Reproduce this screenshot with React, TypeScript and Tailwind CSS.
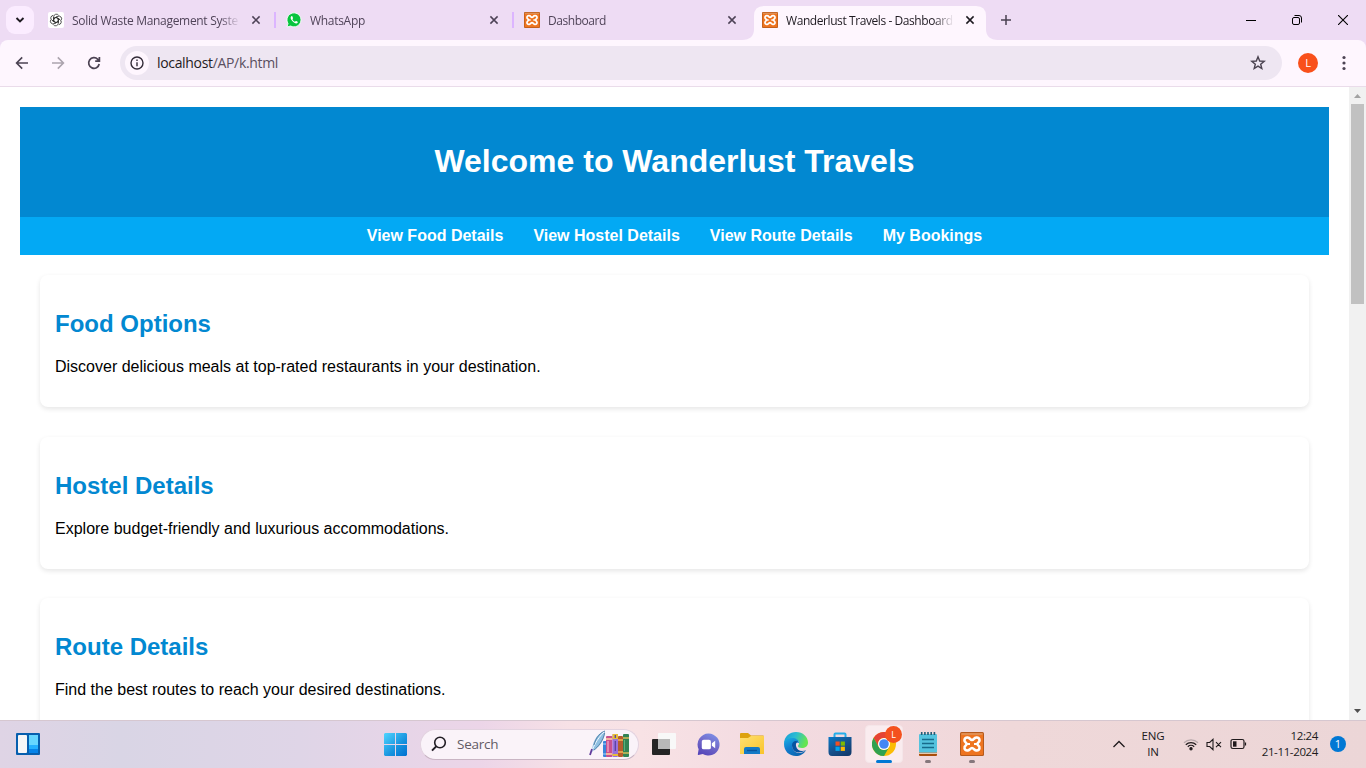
import React from "react";

function Xampp({ size }: { size: number }) {
  return (
    <svg width={size} height={size} viewBox="0 0 24 24">
      <rect width="24" height="24" rx="1.5" fill="#b55a1c" />
      <rect x="1" y="1" width="22" height="22" rx="1" fill="#ee7420" />
      <path d="M1.5 2h21" stroke="#dc9a68" strokeWidth="1.4" />
      <path
        d="M8 5.6C5.6 5.2 4.3 6.6 4.5 8.6C4.6 10.2 6.6 10.6 6.6 12C6.6 13.4 4.6 13.8 4.5 15.4C4.3 17.4 5.6 18.8 8 18.4C10 18.2 10.2 16 12 16C13.8 16 14 18.2 16 18.4C18.4 18.8 19.7 17.4 19.5 15.4C19.4 13.8 17.4 13.4 17.4 12C17.4 10.6 19.4 10.2 19.5 8.6C19.7 6.6 18.4 5.2 16 5.6C14 5.8 13.8 8 12 8C10.2 8 10 5.8 8 5.6Z"
        fill="#ee7420"
        stroke="#fff"
        strokeWidth="2.6"
      />
      <path d="M7 12h3M14 12h3" stroke="#fff" strokeWidth="2" />
    </svg>
  );
}

function ChatGpt() {
  return (
    <svg width="16" height="16" viewBox="0 0 16 16">
      <rect width="16" height="16" rx="2" fill="#fff" />
      <g fill="none" stroke="#333" strokeWidth="0.8">
        {[0, 60, 120, 180, 240, 300].map((a) => (
          <path key={a} transform={`rotate(${a} 8 8)`} d="M5.7 9.4V4.7A2.7 2.7 0 0 1 10.6 3.3M5.7 6.7L8 5.3L11.8 7.5" />
        ))}
      </g>
    </svg>
  );
}

function WhatsApp() {
  return (
    <svg width="16" height="16" viewBox="0 0 16 16">
      <path d="M1 15L2 11.5A7 7 0 1 1 4.6 14Z" fill="#08c43e" stroke="#f7fff9" strokeWidth="0.9" />
      <path d="M5.4 4.2C4.1 5 4.5 7 6.3 9.1C8.2 11.2 10.3 12 11.4 11C12 10.4 11.9 10 11.6 9.8L10.2 9.1C9.8 9 9.3 9.9 9 9.8C8.1 9.5 6.9 8.3 6.5 7.4C6.4 7 7.2 6.6 7 6.1L6.4 4.6C6.2 4.1 5.8 4 5.4 4.2Z" fill="#fff" />
    </svg>
  );
}

function Close({ dark = false }: { dark?: boolean }) {
  return (
    <svg className="shrink-0" width="10" height="10" viewBox="0 0 10 10">
      <path d="M1.4 1.4L8.6 8.6M8.6 1.4L1.4 8.6" stroke={dark ? "#1d1a20" : "#4d4256"} strokeWidth="1.5" />
    </svg>
  );
}

function Tab({ icon, title, active = false, divider = false }: { icon: React.ReactNode; title: React.ReactNode; active?: boolean; divider?: boolean }) {
  return (
    <div className="relative flex h-[34px] w-[238px] shrink-0 items-center pb-[6px] pl-[10px]">
      {active && (
        <svg className="absolute -left-[10px] top-0" width="256" height="34" viewBox="0 0 256 34">
          <path d="M0 34C8 34 12 30 12 23V10Q12 0 22 0H234Q244 0 244 10V23C244 30 248 34 256 34Z" fill="#fef6fe" />
        </svg>
      )}
      <div className="relative flex w-full items-center">
        {icon}
        <div className="mt-[2px] ml-2 w-[168px] whitespace-nowrap text-[12px] leading-4 [mask-image:linear-gradient(to_right,black_148px,transparent_168px)]">
          <span className={active ? "text-[#1f1b22]" : "text-[#504459]"}>{title}</span>
        </div>
        <div className="ml-[11px]">
          <Close dark={active} />
        </div>
      </div>
      {divider && <div className="absolute right-0 top-[6px] h-4 w-[2px] bg-[#dcb5ff]" />}
    </div>
  );
}

function TabStrip() {
  return (
    <div className="flex h-[40px] items-start bg-[#eedcf4] pt-[6px]">
      <div className="ml-[6px] mr-[4px] flex h-7 w-7 items-center justify-center rounded-[9px] bg-[#fbecff]">
        <svg width="10" height="8" viewBox="0 0 10 8">
          <path d="M1.5 2L5 5.5L8.5 2" fill="none" stroke="#1f1b22" strokeWidth="1.9" />
        </svg>
      </div>
      <Tab icon={<ChatGpt />} title={<span className="tracking-[-0.31px]">Solid Waste Management Syste</span>} divider />
      <Tab icon={<WhatsApp />} title={<span className="tracking-[-0.3px]">WhatsApp</span>} divider />
      <Tab icon={<Xampp size={16} />} title={<span className="tracking-[-0.45px]">Dashboard</span>} />
      <Tab icon={<Xampp size={16} />} title={<span className="tracking-[-0.42px]">Wanderlust Travels - Dashboard</span>} active />
      <svg className="ml-[10px] mt-[8px]" width="12" height="12" viewBox="0 0 12 12">
        <path d="M6 1v10M1 6h10" stroke="#4a4050" strokeWidth="1.5" />
      </svg>
      <div className="mr-[18px] ml-auto flex h-7 items-center gap-[36px]">
        <svg width="10" height="10" viewBox="0 0 10 10">
          <path d="M0 5.5h10" stroke="#000" />
        </svg>
        <svg width="10" height="10" viewBox="0 0 10 10" fill="none" stroke="#000">
          <rect x=".5" y="2.5" width="7" height="7" rx="1.5" />
          <path d="M2.5 .5H7A2.5 2.5 0 0 1 9.5 3V7.5" />
        </svg>
        <svg width="10" height="10" viewBox="0 0 10 10">
          <path d="M0 0L10 10M10 0L0 10" stroke="#000" strokeWidth="1.1" />
        </svg>
      </div>
    </div>
  );
}

function Toolbar() {
  return (
    <div className="bg-[#eedcf4]">
      <div className="flex h-[47px] items-center rounded-t-[8px] border-b border-[#eadcea] bg-[#fef6fe]">
        <svg className="ml-[15px]" width="14" height="14" viewBox="0 0 14 14" fill="none" stroke="#4c4353" strokeWidth="1.6">
          <path d="M13 7H2M7.2 1.4L1.6 7L7.2 12.6" />
        </svg>
        <svg className="ml-[22px]" width="14" height="14" viewBox="0 0 14 14" fill="none" stroke="#aca4ae" strokeWidth="1.6">
          <path d="M1 7H12M6.8 1.4L12.4 7L6.8 12.6" />
        </svg>
        <svg className="ml-[22px]" width="14" height="14" viewBox="0 0 14 14" fill="none" stroke="#4c4353" strokeWidth="1.7">
          <path d="M12.2 8A5.3 5.3 0 1 1 10.8 3.3L12.3 4.8M12.4 1V5.2H8.2" />
        </svg>
        <div className="ml-[19px] flex h-[34px] w-[1162px] items-center rounded-full bg-[#eee6f2] pl-[5px] pr-[16px]">
          <div className="flex h-6 w-6 items-center justify-center rounded-full bg-[#fef6fe]">
            <svg width="14" height="14" viewBox="0 0 14 14" fill="none" stroke="#332b38" strokeWidth="1.4">
              <circle cx="7" cy="7" r="6" />
              <path d="M7 6.2V10.3M7 3.6V5.1" />
            </svg>
          </div>
          <div className="ml-2 whitespace-nowrap text-[14px] leading-5 tracking-[-0.33px] text-[#5a4f60]">
            <span className="text-[#1f1b22]">localhost</span>/AP/k.html
          </div>
          <svg className="ml-auto" width="16" height="16" viewBox="0 0 16 16" fill="none" stroke="#4a4250" strokeWidth="1.4">
            <path d="M8 1.8L9.7 6L14.2 6.3L10.7 9.2L11.8 13.6L8 11.2L4.2 13.6L5.3 9.2L1.8 6.3L6.3 6Z" />
          </svg>
        </div>
        <div className="ml-[16px] flex h-5 w-5 items-center justify-center rounded-full bg-[#f9501b] text-[11px] text-white">L</div>
        <svg className="ml-[24px]" width="4" height="16" viewBox="0 0 4 16" fill="#4c4353">
          <circle cx="2" cy="2.5" r="1.6" />
          <circle cx="2" cy="8" r="1.6" />
          <circle cx="2" cy="13.5" r="1.6" />
        </svg>
      </div>
    </div>
  );
}

const cards = [
  ["Food Options", "Discover delicious meals at top-rated restaurants in your destination."],
  ["Hostel Details", "Explore budget-friendly and luxurious accommodations."],
  ["Route Details", "Find the best routes to reach your desired destinations."],
];

function Page() {
  return (
    <div className="flex h-[633px] bg-white font-['Liberation_Sans',Arial,sans-serif]">
      <div className="h-full flex-1 overflow-hidden p-5">
        <header className="flex h-[110px] items-center justify-center bg-[#0288d1] pb-[2px] text-white">
          <h1 className="text-[32px] leading-[36px] font-bold">Welcome to Wanderlust Travels</h1>
        </header>
        <nav className="flex h-[38px] items-center justify-center gap-[30px] bg-[#03a9f4] text-[16px] leading-[18px] font-bold text-white">
          <span>View Food Details</span>
          <span>View Hostel Details</span>
          <span>View Route Details</span>
          <span>My Bookings</span>
        </nav>
        <main className="flex flex-col gap-[29.86px] p-5">
          {cards.map(([title, text]) => (
            <section key={title} className="h-[131.84px] shrink-0 rounded-[8px] bg-white px-[15px] pt-[35px] shadow-[0_2px_5px_rgba(0,0,0,0.1)]">
              <h2 className="text-[24px] leading-[27px] font-bold text-[#0288d1]">{title}</h2>
              <p className="mt-[21px] text-[16px] leading-[18px] text-black">{text}</p>
            </section>
          ))}
        </main>
      </div>
      <div className="flex w-[17px] flex-col items-center justify-between bg-[#f1f1f1]">
        <div className="flex flex-col items-center">
          <svg width="17" height="17" viewBox="0 0 17 17">
            <path d="M5 11L8.5 7L12 11Z" fill="#a3a3a3" />
          </svg>
          <div className="h-[200px] w-[13px] bg-[#c1c1c1]" />
        </div>
        <svg width="17" height="17" viewBox="0 0 17 17">
          <path d="M5 6L8.5 10L12 6Z" fill="#505050" />
        </svg>
      </div>
    </div>
  );
}

function Slot({ children, running = false, active = false }: { children: React.ReactNode; running?: boolean; active?: boolean }) {
  return (
    <div className="relative flex h-full w-[44px] shrink-0 items-center justify-center">
      {active && <div className="absolute inset-x-[3px] top-[4px] h-[38px] rounded-[4px] border border-[#f5e6e9] bg-[#faecef]" />}
      <div className="relative">{children}</div>
      {running && <div className="absolute bottom-[4px] left-[19px] h-[3px] w-[6px] rounded-full bg-[#85777c]" />}
      {active && <div className="absolute bottom-[4px] left-[14px] h-[3px] w-4 rounded-full bg-[#0078d4]" />}
    </div>
  );
}

function Books() {
  return (
    <svg width="41" height="28" viewBox="0 0 41 28">
      <path d="M3 22C3 15 6 4 16 1C16 9 11 17 4 21Z" fill="#8fc0e2" />
      <path d="M1.5 25C4 17 8 9 15 2" fill="none" stroke="#eef8ff" strokeWidth="1" />
      <path d="M16 1C12 2 7 7 5 15M15.7 3C14 11 9 17 5 20" fill="none" stroke="#46749b" strokeWidth=".8" />
      <path d="M1 25L3 19" stroke="#633c9c" strokeWidth="1.8" />
      <rect x="14" y="11" width="4" height="16" rx="1" fill="#3984db" />
      <path d="M14 14h4M14 24h4" stroke="#a5d4fa" />
      <rect x="17" y="6" width="6.5" height="21" rx="1" fill="#c9518f" />
      <path d="M19 11v11" stroke="#ef9fc4" strokeWidth="1.4" />
      <path d="M17 9h6.5M17 24h6.5" stroke="#ffd5a1" strokeWidth="1.4" />
      <rect x="23.5" y="4" width="5.5" height="23" rx="1" fill="#9a71dc" />
      <path d="M23.5 4h5.5v5h-5.5zM23.5 24h5.5v2h-5.5z" fill="#e7bd38" />
      <path d="M26.3 5v3M26.3 11v10" stroke="#5b43a0" strokeWidth="1.3" />
      <rect x="29" y="6" width="5" height="21" rx="1" fill="#b65c2e" />
      <path d="M29 10h5M29 22h5" stroke="#f2b554" strokeWidth="1.4" />
      <rect x="34" y="4" width="6" height="23" rx="1" fill="#328354" />
      <path d="M34 8h6M34 23h6" stroke="#d5bd59" strokeWidth="1.4" />
      <path d="M35.5 10v11" stroke="#69b984" strokeWidth=".8" />
    </svg>
  );
}

function StartIcon() {
  return (
    <svg width="23" height="23" viewBox="0 0 23 23">
      <defs>
        <linearGradient id="start" x1="0" y1="0" x2="1" y2="1">
          <stop stopColor="#50d5ff" />
          <stop offset=".6" stopColor="#1692de" />
          <stop offset="1" stopColor="#0070d0" />
        </linearGradient>
      </defs>
      <path d="M1 0H11V11H0V1ZM12 0H22L23 1V11H12ZM0 12H11V23H1L0 22ZM12 12H23V22L22 23H12Z" fill="url(#start)" />
    </svg>
  );
}

function Chat() {
  return (
    <svg width="23" height="23" viewBox="0 0 24 24">
      <defs>
        <linearGradient id="chat" x1=".8" y1="0" x2=".3" y2="1">
          <stop stopColor="#7d91e8" />
          <stop offset=".5" stopColor="#7269c9" />
          <stop offset="1" stopColor="#5647ba" />
        </linearGradient>
      </defs>
      <path d="M12 .5A11.5 11.5 0 1 1 6 21.8L1.5 23Q.6 23.2 .9 22L1.7 17A11.5 11.5 0 0 1 12 .5Z" fill="url(#chat)" />
      <rect x="5" y="7" width="9.5" height="10" rx="2" fill="#fff" />
      <path d="M15.5 10.7L19 8V16L15.5 13.3Z" fill="#fff" />
    </svg>
  );
}

function Explorer() {
  return (
    <svg width="24" height="24" viewBox="0 0 24 24">
      <defs>
        <linearGradient id="folder" x1="0" y1="0" x2="1" y2="1">
          <stop stopColor="#ffe071" />
          <stop offset="1" stopColor="#f9c42c" />
        </linearGradient>
      </defs>
      <path d="M0 2Q0 1 1 1H8L11 3.5H23Q24 3.5 24 4.5V10H0Z" fill="#dda20e" />
      <path d="M0 6H8L11 4H24V22H0Z" fill="url(#folder)" />
      <path d="M4 22V17Q4 15 6 15H18Q20 15 20 17V22Z" fill="#147ac6" />
      <path d="M7 18.5H17" stroke="#0a559c" strokeWidth="1.4" />
    </svg>
  );
}

function Edge() {
  return (
    <svg width="24" height="24" viewBox="0 0 24 24">
      <defs>
        <linearGradient id="edgetop" x1="0" y1="0" x2="1" y2=".3">
          <stop stopColor="#159dd7" />
          <stop offset=".5" stopColor="#2cbbd3" />
          <stop offset="1" stopColor="#65e552" />
        </linearGradient>
        <linearGradient id="edgeleft" x1="0" y1="0" x2=".6" y2="1">
          <stop stopColor="#1bb1e5" />
          <stop offset=".5" stopColor="#117dce" />
          <stop offset="1" stopColor="#0b65b0" />
        </linearGradient>
      </defs>
      <path d="M0 12C0 4 6 0 12 0C19 0 24 5 24 10.5C24 14.5 21 16 18 16C15 16 14 15 14 14C14 13 15 13 15 11C15 8 12 7 9 7C4 7 0 10 0 12Z" fill="url(#edgetop)" />
      <path d="M0 12C0 8 4 6 8 6C12 6 15 8 15 11C10 9 7 13 9 17C11 22 18 22 22 18C20 22 16 24 12 24C5 24 0 19 0 12Z" fill="url(#edgeleft)" />
      <path d="M8 13C8 18 12 24 22 18C18 20 13 19 12 14C11.5 12 12.5 10.5 14 9.6C11 8 8 10 8 13Z" fill="#0753a0" />
    </svg>
  );
}

function Store() {
  return (
    <svg width="24" height="24" viewBox="0 0 24 24">
      <defs>
        <linearGradient id="store" x1="0" y1="0" x2=".7" y2="1">
          <stop stopColor="#0879c8" />
          <stop offset=".6" stopColor="#16508b" />
          <stop offset="1" stopColor="#123c6e" />
        </linearGradient>
      </defs>
      <path d="M6.5 6V2.5Q6.5 1.5 7.5 1.5H16.5Q17.5 1.5 17.5 2.5V6" fill="none" stroke="#23adea" strokeWidth="2" />
      <path d="M.5 5H23.5V20Q23.5 24 20 24H4Q.5 24 .5 20Z" fill="url(#store)" />
      <path d="M7.5 9.5h4.2v4.2H7.5z" fill="#f25022" />
      <path d="M12.7 9.5h4.2v4.2h-4.2z" fill="#7fba00" />
      <path d="M7.5 14.7h4.2v4.2H7.5z" fill="#00a4ef" />
      <path d="M12.7 14.7h4.2v4.2h-4.2z" fill="#ffb900" />
    </svg>
  );
}

function Chrome() {
  return (
    <div className="relative h-6 w-6">
      <svg width="24" height="24" viewBox="0 0 24 24">
        <circle cx="12" cy="12" r="12" fill="#fbbc05" />
        <path d="M1.6 6A12 12 0 0 1 22.4 6H12A6 6 0 0 0 6.8 15Z" fill="#e54335" />
        <path d="M1.6 6A12 12 0 0 0 12 24L17.2 15A6 6 0 0 1 6.8 15Z" fill="#30a150" />
        <circle cx="12" cy="12" r="6" fill="#fff" />
        <circle cx="12" cy="12" r="4.8" fill="#4387f4" />
      </svg>
      <div className="absolute -top-[6px] left-[13px] flex h-[17px] w-[17px] items-center justify-center rounded-full bg-[#f4511e] text-[9px] text-white">L</div>
    </div>
  );
}

function Notepad() {
  return (
    <svg width="20" height="24" viewBox="0 0 20 24">
      <path d="M1 20H19V23Q19 24 18 24H2Q1 24 1 23Z" fill="#a84e0b" />
      <path d="M1 21.2h18" stroke="#f3e9dd" strokeWidth="1.2" />
      <rect x="1" y="2" width="18" height="18.5" rx="1" fill="#54c3de" />
      <path d="M4 7.5h12M4 11.5h12M4 15.5h12" stroke="#176b8b" strokeWidth="1.7" />
      <path d="M3.7 0v3M6.9 0v3M10 0v3M13.2 0v3M16.4 0v3" stroke="#235c75" strokeWidth="1.6" />
    </svg>
  );
}

function Taskbar() {
  return (
    <div className="flex h-[48px] items-center border-t border-[#d6c7d0] bg-[linear-gradient(90deg,#dfd4e5_0px,#d9d5e5_120px,#dfd5e7_300px,#ecd5e8_480px,#f7e1e6_570px,#f8e2e5_640px,#f3dbe1_760px,#f2d9dd_900px,#efd8d9_1010px,#ecd6d7_1366px)] pb-[1px]">
      <svg className="ml-4" width="24" height="22" viewBox="0 0 24 22">
        <rect width="24" height="22" rx="1" fill="#075fae" />
        <rect x="2" y="2" width="9" height="18" rx="1" fill="#f7f7f7" />
        <path d="M13 2h9v10h-9z" fill="#66d6ff" />
        <path d="M13 12h9v4h-9z" fill="#24b0ff" />
        <path d="M13 16h9v4h-9z" fill="#0583e9" />
      </svg>
      <div className="ml-[333px] flex h-full items-center">
        <Slot>
          <StartIcon />
        </Slot>
        <div className="mr-[3px] ml-[3px] flex h-[31px] w-[219px] items-center rounded-full border border-[#e3d3e0] border-b-[#c9b5c4] bg-[#faf3f9] pl-[10px] pr-[8px]">
          <svg width="16" height="16" viewBox="0 0 16 16" fill="none" stroke="#211d24" strokeWidth="1.6">
            <circle cx="9" cy="6.5" r="5.3" />
            <path d="M5.2 10.4L1 14.6" strokeWidth="2" />
          </svg>
          <span className="ml-[10px] text-[13.5px] leading-5 tracking-[-0.25px] text-[#625b65]">Search</span>
          <div className="ml-auto">
            <Books />
          </div>
        </div>
        <Slot>
          <svg width="24" height="22" viewBox="0 0 24 22">
            <rect x="0" y="6" width="18" height="16" rx="1" fill="#252525" />
            <rect x="6" y="0" width="18" height="16" rx="1" fill="#f8f8f8" />
            <path d="M6 6h12v10H6z" fill="#b9b9b9" />
          </svg>
        </Slot>
        <Slot>
          <Chat />
        </Slot>
        <Slot>
          <Explorer />
        </Slot>
        <Slot>
          <Edge />
        </Slot>
        <Slot>
          <Store />
        </Slot>
        <Slot active>
          <Chrome />
        </Slot>
        <Slot running>
          <Notepad />
        </Slot>
        <Slot running>
          <Xampp size={24} />
        </Slot>
      </div>
      <div className="mr-[20px] ml-auto flex items-center text-[11.5px] leading-4 text-[#201a1c]">
        <svg width="12" height="8" viewBox="0 0 12 8">
          <path d="M.5 7L6 1.5L11.5 7" fill="none" stroke="#201a1c" strokeWidth="1.3" />
        </svg>
        <div className="ml-[15px] w-[26px] text-center text-[11.5px] tracking-[-0.1px]">
          ENG
          <br />
          IN
        </div>
        <svg className="ml-[17px]" width="16" height="13" viewBox="0 0 16 13" fill="none" stroke="#201a1c" strokeWidth="1.2">
          <path d="M1 4.8A10 10 0 0 1 15 4.8" stroke="#b6a7aa" />
          <path d="M2.8 6.7A7.4 7.4 0 0 1 13.2 6.7M4.8 8.7A4.7 4.7 0 0 1 11.2 8.7" />
          <circle cx="8" cy="10.7" r="1.1" fill="#201a1c" />
        </svg>
        <svg className="ml-[7px]" width="16" height="13" viewBox="0 0 16 13" fill="none" stroke="#201a1c" strokeWidth="1.1">
          <path d="M1 4.5H3.7L7 1.3V11.7L3.7 8.5H1ZM10 4.2L15 9.2M15 4.2L10 9.2" />
        </svg>
        <svg className="ml-[8px]" width="17" height="12" viewBox="0 0 17 12" fill="none" stroke="#201a1c" strokeWidth="1.2">
          <rect x="1" y="1.5" width="13" height="9" rx="1.8" />
          <path d="M3 3.3h3.5v5.4H3z" fill="#201a1c" stroke="none" />
          <path d="M15.5 4.5v3" />
        </svg>
        <div className="ml-[11px] w-[60px] text-right whitespace-nowrap text-[11.5px] tracking-[-0.37px]">
          12:24
          <br />
          21-11-2024
        </div>
        <div className="ml-[12px] flex h-4 w-4 items-center justify-center rounded-full bg-[#0078d4] text-[11px] text-white">1</div>
      </div>
    </div>
  );
}

export default function App() {
  return (
    <div className="flex h-[768px] w-[1366px] flex-col overflow-hidden font-['Open_Sans','Noto_Sans',sans-serif]">
      <TabStrip />
      <Toolbar />
      <Page />
      <Taskbar />
    </div>
  );
}
